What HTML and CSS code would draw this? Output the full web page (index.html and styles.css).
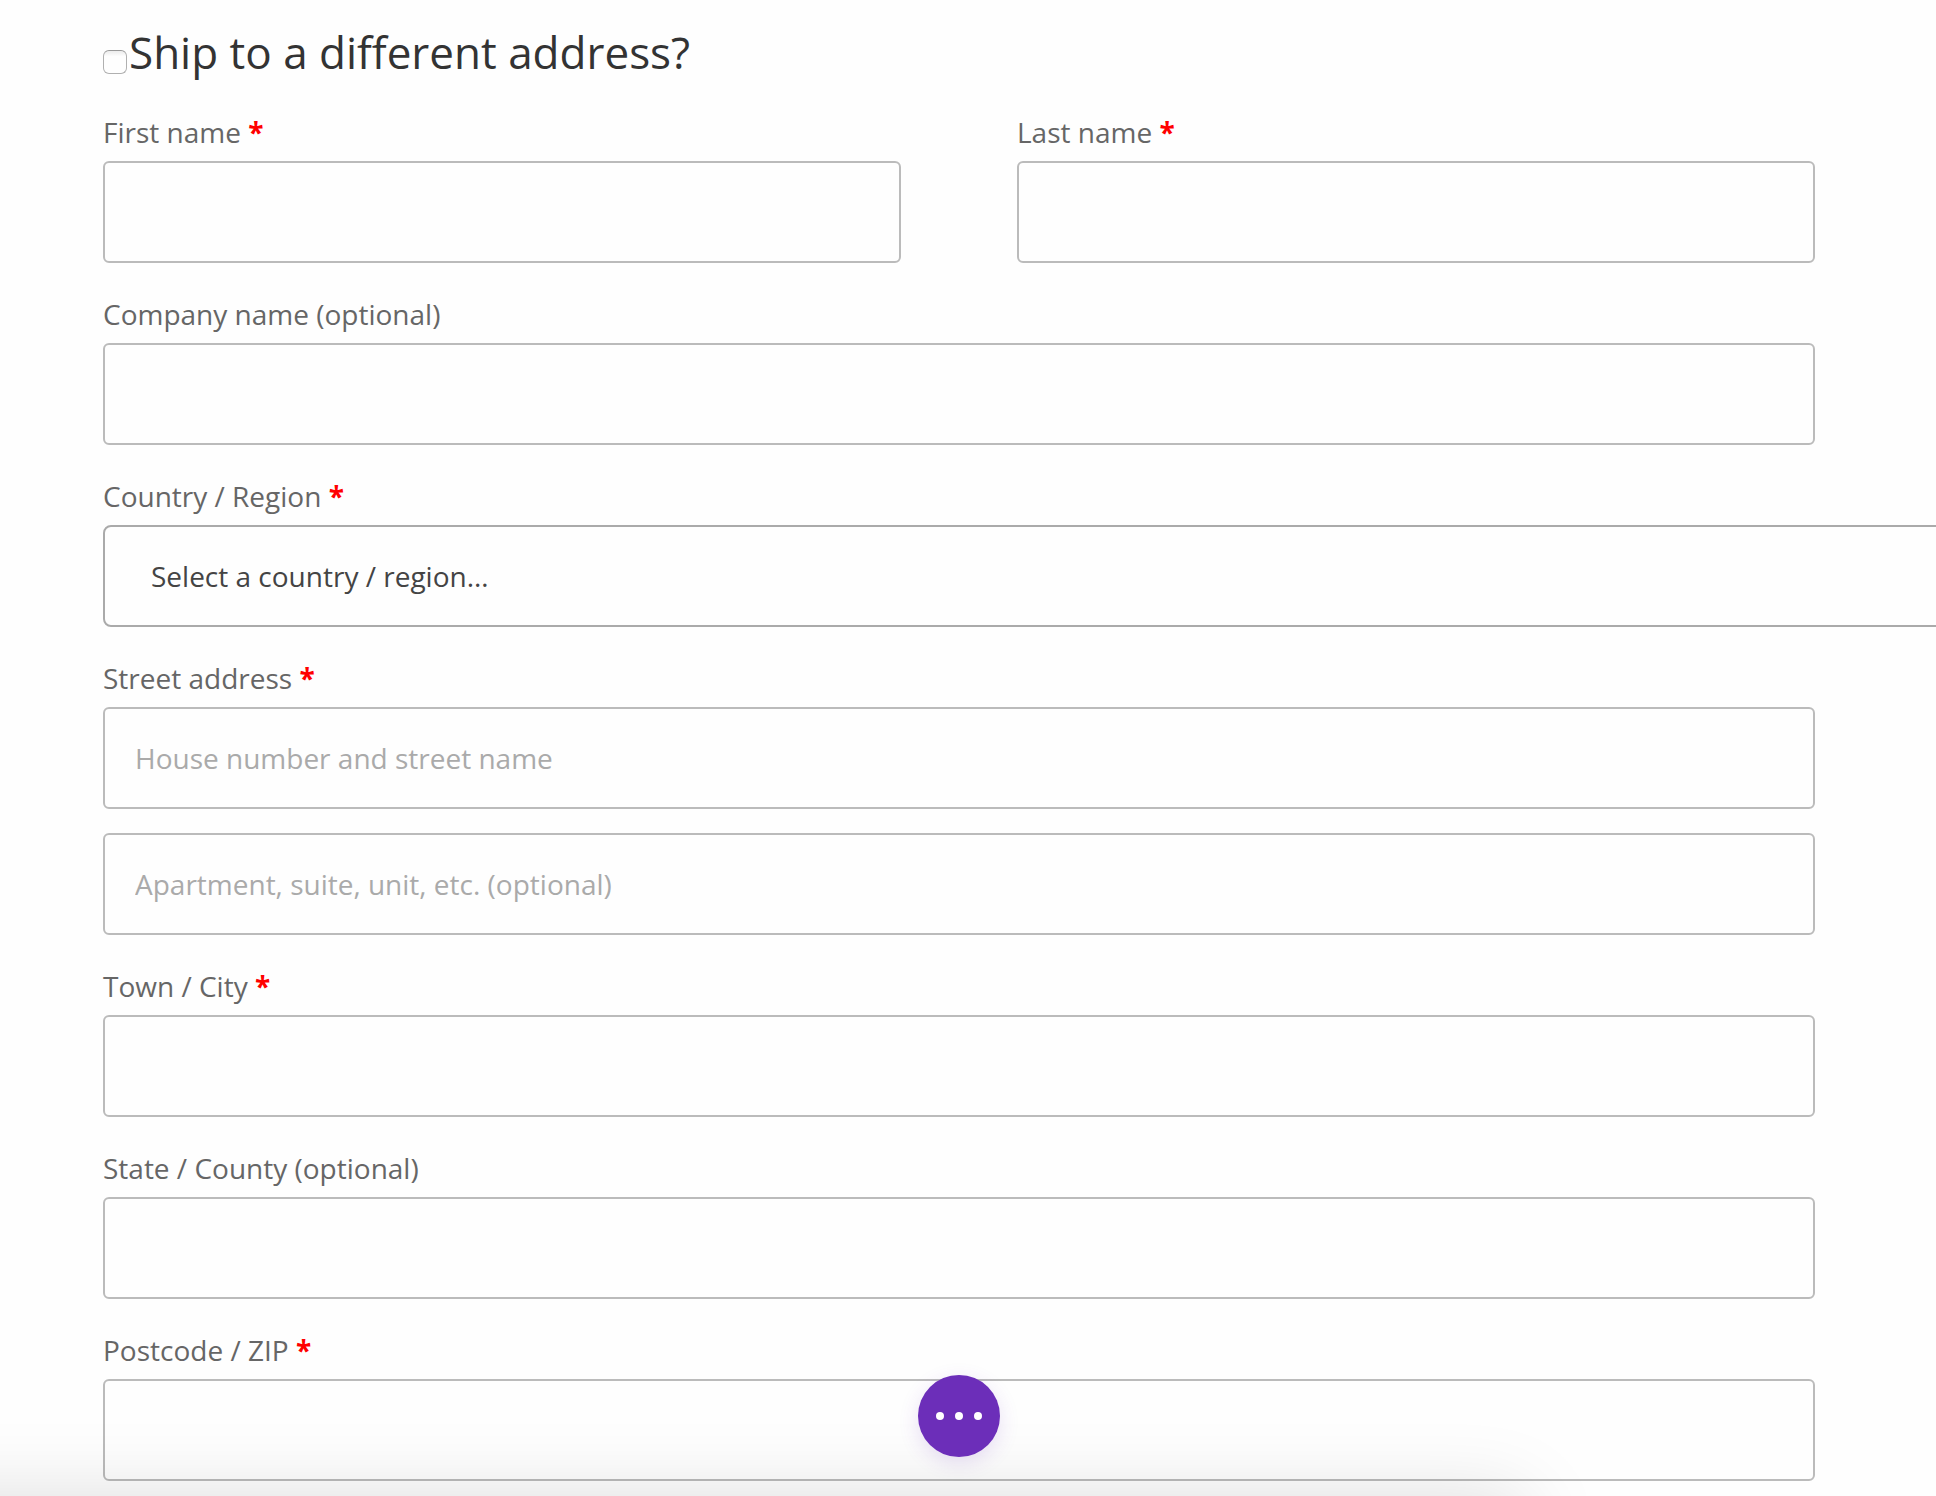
FILE: index.html
```html
<!DOCTYPE html>
<html lang="en">
<head>
  <meta charset="utf-8">
  <meta name="viewport" content="width=device-width, initial-scale=1">
  <title>Checkout – Shipping address</title>
  <link rel="stylesheet" href="styles.css">
</head>
<body>
  <main class="page">
    <form class="shipping">
      <h3 class="shipping-title">
        <input class="shipping-toggle" type="checkbox" id="ship-different">
        <label for="ship-different">Ship to a different address?</label>
      </h3>

      <div class="fields">
        <div class="field-pair">
          <div class="field">
            <label class="field-label" for="first-name">First name <abbr class="required">*</abbr></label>
            <input class="field-input" type="text" id="first-name">
          </div>
          <div class="field">
            <label class="field-label" for="last-name">Last name <abbr class="required">*</abbr></label>
            <input class="field-input" type="text" id="last-name">
          </div>
        </div>

        <div class="field">
          <label class="field-label" for="company">Company name (optional)</label>
          <input class="field-input" type="text" id="company">
        </div>

        <div class="field">
          <label class="field-label" for="country">Country / Region <abbr class="required">*</abbr></label>
          <select class="field-select" id="country">
            <option>Select a country / region…</option>
          </select>
        </div>

        <div class="field">
          <label class="field-label" for="address-1">Street address <abbr class="required">*</abbr></label>
          <input class="field-input" type="text" id="address-1" placeholder="House number and street name">
        </div>

        <div class="field">
          <input class="field-input" type="text" id="address-2" aria-label="Apartment, suite, unit, etc." placeholder="Apartment, suite, unit, etc. (optional)">
        </div>

        <div class="field">
          <label class="field-label" for="city">Town / City <abbr class="required">*</abbr></label>
          <input class="field-input" type="text" id="city">
        </div>

        <div class="field">
          <label class="field-label" for="state">State / County (optional)</label>
          <input class="field-input" type="text" id="state">
        </div>

        <div class="field">
          <label class="field-label" for="postcode">Postcode / ZIP <abbr class="required">*</abbr></label>
          <input class="field-input" type="text" id="postcode">
        </div>
      </div>
    </form>
  </main>

  <div class="builder-bar">
    <button class="builder-toggle" type="button" aria-label="Open page settings">
      <span class="dot"></span>
      <span class="dot"></span>
      <span class="dot"></span>
    </button>
  </div>
  <div class="drawer"></div>
</body>
</html>
```
FILE: styles.css
```css
* {
  box-sizing: border-box;
}

body {
  margin: 0;
  background: #fefefe;
  color: #666;
  font-family: "Open Sans", Arial, sans-serif;
  font-size: 28px;
}

.page {
  padding: 30px 121px 15px 103px;
  overflow: hidden;
}

.shipping-title {
  display: flex;
  align-items: flex-end;
  gap: 2px;
  margin: 0 0 31px;
  color: #333;
  font-size: 44px;
  font-weight: 400;
  line-height: 44px;
}

.shipping-toggle {
  appearance: none;
  flex: none;
  width: 24px;
  height: 24px;
  margin: 0;
  border: 1px solid #b0b0b0;
  border-top-color: #999;
  border-radius: 6px;
  background: linear-gradient(#ececec, #fefefe 25%);
}

.shipping-toggle:checked {
  background: #6c2eb9;
}

.fields {
  display: grid;
  gap: 24px;
}

.field-pair {
  display: grid;
  grid-template-columns: 1fr 1fr;
  gap: 116px;
}

.field {
  min-width: 0;
}

.field-label {
  display: block;
  padding-bottom: 2px;
  line-height: 54px;
}

.required {
  color: #f00;
  font-weight: 700;
  text-decoration: none;
}

.field-input,
.field-select {
  display: block;
  width: 100%;
  height: 102px;
  margin: 0;
  padding: 0 30px;
  border: 2px solid #bbb;
  border-radius: 6px;
  background: #fefefe;
  color: #4e4e4e;
  font: inherit;
}

.field-input::placeholder {
  color: #aaa;
  opacity: 1;
}

/* The country list runs past the right side of the window. */
.field-select {
  appearance: none;
  width: 120%;
  padding: 0 46px;
  border-color: #aaa;
  border-radius: 8px;
  color: #444;
}

.builder-bar {
  position: fixed;
  z-index: 2;
  right: 121px;
  bottom: 39px;
  left: 103px;
  display: flex;
  justify-content: center;
  pointer-events: none;
}

.builder-toggle {
  display: flex;
  align-items: center;
  justify-content: center;
  gap: 11px;
  width: 82px;
  height: 82px;
  padding: 0;
  border: 0;
  border-radius: 50%;
  background: #6c2eb9;
  box-shadow: 0 6px 20px rgba(108, 46, 185, 0.15);
  cursor: pointer;
  pointer-events: auto;
}

.dot {
  width: 8px;
  height: 8px;
  border-radius: 50%;
  background: #fff;
}

/* Closed drawer, parked under the window; only its shadow shows. */
.drawer {
  position: fixed;
  z-index: 1;
  top: 100%;
  right: 411px;
  left: -100px;
  height: 200px;
  box-shadow: 0 0 80px rgba(0, 0, 0, 0.13);
  pointer-events: none;
}
```
